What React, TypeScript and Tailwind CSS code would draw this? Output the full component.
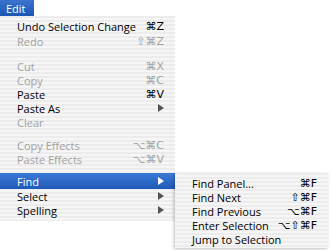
import React from 'react'

type Item = { label: string; keys?: string; disabled?: boolean; sub?: boolean; active?: boolean; h?: string }

const stripes = 'bg-[repeating-linear-gradient(180deg,#ececec_0px,#ececec_2px,#f6f6f6_2px,#f6f6f6_4px)]'

function Arrow({ light }: { light?: boolean }) {
  return (
    <svg width="6" height="8" viewBox="0 0 6 8" className="block">
      <path d="M0 0 L6 4 L0 8 Z" fill={light ? '#ffffff' : '#555555'} />
    </svg>
  )
}

function Row({ item }: { item: Item }) {
  const color = item.active ? 'text-white' : item.disabled ? 'text-[#a2a2a2]' : 'text-black'
  return (
    <div
      className={`flex items-center justify-between whitespace-nowrap pl-[17px] pr-[11px] ${item.h ?? 'h-[14px]'} ${color} ${item.active ? 'bg-[linear-gradient(180deg,#3d7ad6,#1f59b8)]' : ''}`}
    >
      <span>{item.label}</span>
      {item.sub ? <Arrow light={item.active} /> : <span className="font-['DejaVu_Sans',sans-serif] text-[11px]">{item.keys}</span>}
    </div>
  )
}

export default function App() {
  const groups: Item[][] = [
    [
      { label: 'Undo Selection Change', keys: '⌘Z', h: 'h-[15px]' },
      { label: 'Redo', keys: '⇧⌘Z', disabled: true, h: 'h-[15px]' },
    ],
    [
      { label: 'Cut', keys: '⌘X', disabled: true },
      { label: 'Copy', keys: '⌘C', disabled: true },
      { label: 'Paste', keys: '⌘V' },
      { label: 'Paste As', sub: true },
      { label: 'Clear', disabled: true },
    ],
    [
      { label: 'Copy Effects', keys: '⌥⌘C', disabled: true },
      { label: 'Paste Effects', keys: '⌥⌘V', disabled: true },
    ],
    [
      { label: 'Find', sub: true, active: true, h: 'h-[16px]' },
      { label: 'Select', sub: true },
      { label: 'Spelling', sub: true },
    ],
  ]
  const gaps = ['h-[10px]', 'h-[9px]', 'h-[7px]']

  const findItems: Item[] = [
    { label: 'Find Panel...', keys: '⌘F' },
    { label: 'Find Next', keys: '⇧⌘F' },
    { label: 'Find Previous', keys: '⌥⌘F' },
    { label: 'Enter Selection', keys: '⌥⇧⌘F' },
    { label: 'Jump to Selection' },
  ]

  return (
    <div className="relative w-[331px] h-[250px] overflow-hidden bg-white font-['Open_Sans',sans-serif] text-[11px] leading-none">
      <div className="w-[34px] h-[16px] bg-[linear-gradient(180deg,#3a74cf,#1c56b3)] text-white pl-[6px] flex items-center">
        Edit
      </div>
      <div className={`w-[175px] pt-[3px] pb-[4px] ${stripes}`}>
        {groups.map((g, i) => (
          <div key={i}>
            {g.map(it => <Row key={it.label} item={it} />)}
            {i < gaps.length && <div className={gaps[i]} />}
          </div>
        ))}
      </div>
      <div className={`absolute left-[175px] top-[173px] w-[153px] h-[75px] pt-[3px] ${stripes} shadow-[-1px_1px_3px_rgba(0,0,0,0.25)]`}>
        {findItems.map(it => <Row key={it.label} item={it} />)}
      </div>
    </div>
  )
}
